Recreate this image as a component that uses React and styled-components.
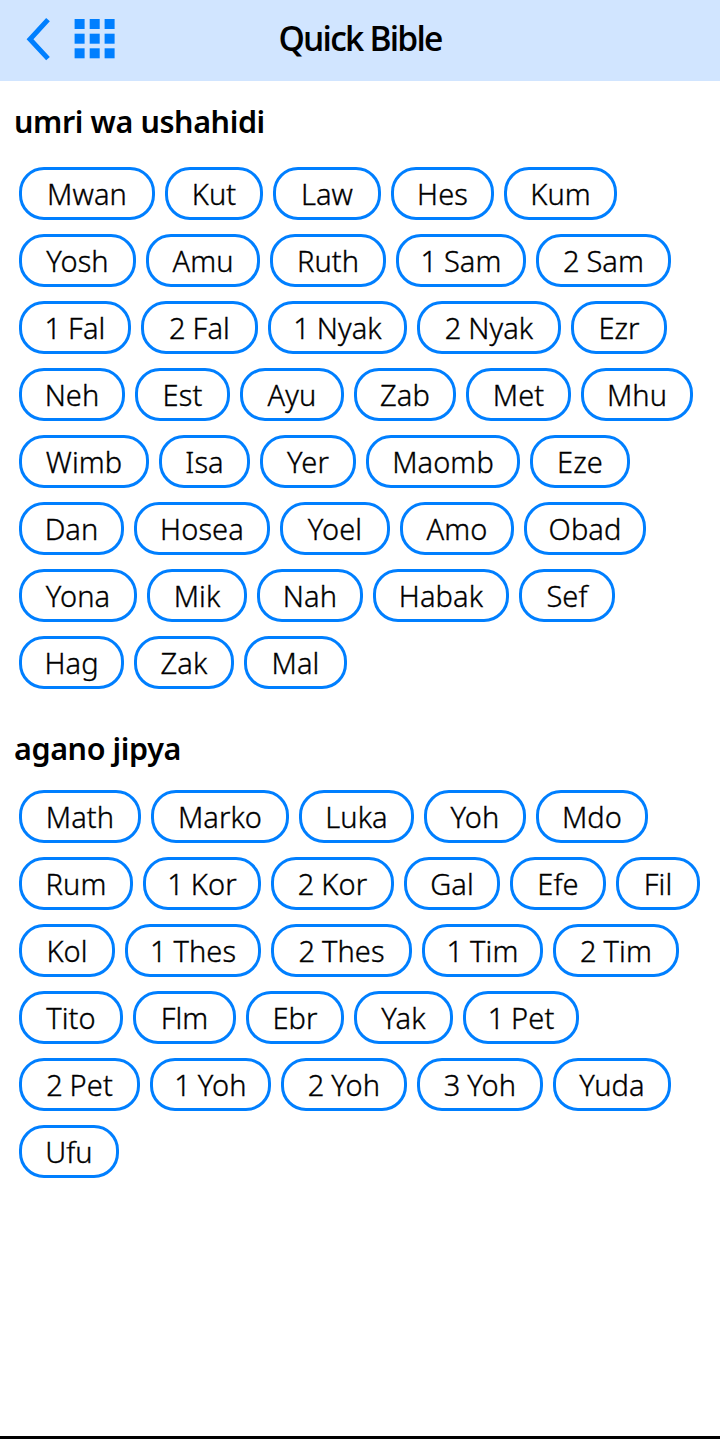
import React from "react";
import styled, { createGlobalStyle } from "styled-components";

const theme = {
  blue: "#007fff",
  header: "#d1e5ff",
};

const GlobalStyle = createGlobalStyle`
  body {
    margin: 0;
    background: #fff;
    color: #000;
    font-family: "Noto Sans", "Open Sans", sans-serif;
  }
`;

const Page = styled.div`
  display: flex;
  flex-direction: column;
  box-sizing: border-box;
  width: 720px;
  height: 1439px;
  border-bottom: 3px solid #000;
`;

const Header = styled.header`
  display: grid;
  grid-template-columns: 200px 1fr 200px;
  align-items: center;
  height: 81px;
  background: ${theme.header};
`;

const Nav = styled.nav`
  display: flex;
  height: 81px;
`;

const Title = styled.h1`
  margin: 0;
  padding-bottom: 5px;
  text-align: center;
  font-family: "Open Sans", sans-serif;
  font-size: 33.5px;
  font-weight: 600;
  line-height: 40px;
  letter-spacing: -1.75px;
  white-space: nowrap;
`;

const SectionTitle = styled.h2`
  height: 40px;
  margin: ${(p) => p.$top}px 0 ${(p) => p.$bottom}px 14px;
  font-size: 30.5px;
  font-weight: 600;
  line-height: 40px;
  letter-spacing: -0.4px;
  white-space: nowrap;
`;

const Books = styled.div`
  display: flex;
  flex-wrap: wrap;
  gap: 14px 10px;
  padding: 0 15px 0 19px;
`;

const Book = styled.button`
  box-sizing: border-box;
  width: ${(p) => p.$width}px;
  height: 53px;
  padding: 0;
  border: 3px solid ${theme.blue};
  border-radius: 25px;
  background: #fff;
  color: #000;
  font-family: inherit;
  font-size: 29px;
  font-weight: 300;
  line-height: 40px;
  letter-spacing: 0.1px;
  word-spacing: -0.8px;
  white-space: nowrap;
  -webkit-text-stroke: 0.35px #000;
`;

const oldTestament = [
  ["Mwan", 136], ["Kut", 98], ["Law", 108], ["Hes", 103], ["Kum", 113],
  ["Yosh", 117], ["Amu", 114], ["Ruth", 116], ["1 Sam", 130], ["2 Sam", 135],
  ["1 Fal", 112], ["2 Fal", 117], ["1 Nyak", 139], ["2 Nyak", 144], ["Ezr", 96],
  ["Neh", 106], ["Est", 95], ["Ayu", 104], ["Zab", 102], ["Met", 105], ["Mhu", 112],
  ["Wimb", 130], ["Isa", 91], ["Yer", 96], ["Maomb", 154], ["Eze", 100],
  ["Dan", 105], ["Hosea", 136], ["Yoel", 110], ["Amo", 114], ["Obad", 122],
  ["Yona", 118], ["Mik", 100], ["Nah", 106], ["Habak", 136], ["Sef", 96],
  ["Hag", 105], ["Zak", 100], ["Mal", 103],
];

const newTestament = [
  ["Math", 122], ["Marko", 138], ["Luka", 115], ["Yoh", 102], ["Mdo", 112],
  ["Rum", 114], ["1 Kor", 118], ["2 Kor", 123], ["Gal", 96], ["Efe", 96], ["Fil", 84],
  ["Kol", 96], ["1 Thes", 136], ["2 Thes", 141], ["1 Tim", 121], ["2 Tim", 126],
  ["Tito", 104], ["Flm", 103], ["Ebr", 98], ["Yak", 99], ["1 Pet", 116],
  ["2 Pet", 121], ["1 Yoh", 121], ["2 Yoh", 126], ["3 Yoh", 126], ["Yuda", 118],
  ["Ufu", 100],
];

function NavIcons() {
  return (
    <svg width="130" height="81" viewBox="0 0 130 81">
      <path d="M48 19.6 30 39.2 48 58.6" fill="none" stroke={theme.blue} strokeWidth="5" />
      {[19, 33.7, 48.3].map((y) =>
        [74.6, 89.7, 104.6].map((x) => (
          <rect key={`${x}-${y}`} x={x} y={y} width="10" height="10" fill={theme.blue} />
        ))
      )}
    </svg>
  );
}

function BookList({ books }) {
  return (
    <Books>
      {books.map(([name, width]) => (
        <Book key={name} $width={width}>
          {name}
        </Book>
      ))}
    </Books>
  );
}

export default function App() {
  return (
    <Page>
      <GlobalStyle />
      <Header>
        <Nav>
          <NavIcons />
        </Nav>
        <Title>Quick Bible</Title>
      </Header>
      <SectionTitle $top={20} $bottom={26}>umri wa ushahidi</SectionTitle>
      <BookList books={oldTestament} />
      <SectionTitle $top={39} $bottom={22}>agano jipya</SectionTitle>
      <BookList books={newTestament} />
    </Page>
  );
}
